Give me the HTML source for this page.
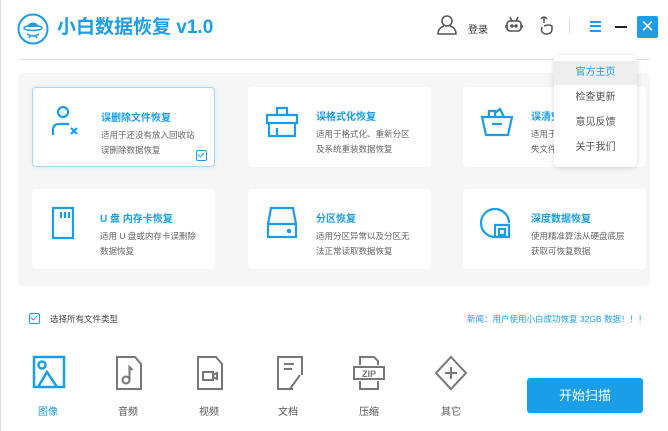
<!DOCTYPE html>
<html><head><meta charset="utf-8"><style>
*{margin:0;padding:0;box-sizing:border-box}
body{width:668px;height:431px;overflow:hidden;background:#fff;font-family:"Liberation Sans","Noto Sans CJK SC",sans-serif;position:relative}
.abs{position:absolute}
.title{left:57px;top:12px;font-size:19px;font-weight:bold;color:#1a9ee8}
.panel{left:18px;top:73px;width:632px;height:213px;background:#f6f6f6;border-radius:6px}
.card{position:absolute;width:183px;height:80px;background:#fff;border-radius:4px}
.card.sel{border:1px solid #a9d6f5;box-shadow:0 0 4px #cde8fb}
.card h4{position:absolute;left:68px;top:21px;font-size:10px;color:#1a9ee8;font-weight:bold}
.card p{position:absolute;left:68px;top:40px;font-size:8.5px;color:#666;line-height:15px;width:115px}
.card svg{position:absolute;left:16px;top:16px}
.menu{left:554px;top:55px;width:83px;height:112px;background:#fff;border-radius:5px;box-shadow:0 1px 6px rgba(0,0,0,.15)}
.menu div{height:24px;line-height:24px;text-align:center;font-size:10px;color:#555;margin-top:1px}
.ft{position:absolute;top:355px}
.lbl{position:absolute;top:403px;font-size:10px;color:#555;width:40px;text-align:center}
.chk{position:absolute;width:11px;height:11px;border:1.5px solid #1a9ee8;border-radius:2px}
.chk::after{content:"";position:absolute;left:2px;top:0px;width:3px;height:5px;border:solid #1a9ee8;border-width:0 1.3px 1.3px 0;transform:rotate(45deg)}
</style></head><body>
<div class="abs" style="left:0;top:0;width:1px;height:431px;background:#ddd"></div>
<svg class="abs" style="left:17px;top:13px" width="32" height="32" viewBox="0 0 32 32"><circle cx="16" cy="16" r="14.5" fill="none" stroke="#1a9ee8" stroke-width="2"/><path d="M9 14q7-9 14 0z" fill="#1a9ee8"/><ellipse cx="16" cy="15" rx="9" ry="2.5" fill="none" stroke="#1a9ee8" stroke-width="1.5"/><path d="M10 21q6 4 12 0M12 25l2-3M20 25l-2-3" stroke="#1a9ee8" stroke-width="1.5" fill="none"/></svg>
<div class="abs title">小白数据恢复 v1.0</div>
<svg class="abs" style="left:437px;top:14px" width="20" height="22" viewBox="0 0 20 22" fill="none" stroke="#555" stroke-width="1.5"><circle cx="10" cy="7" r="5"/><path d="M7 12q-6 2-6 8h18q0-6-6-8"/></svg>
<div class="abs" style="left:468px;top:21px;font-size:10px;color:#333">登录</div>
<svg class="abs" style="left:505px;top:15px" width="18" height="20" viewBox="0 0 18 20" fill="none" stroke="#555" stroke-width="1.6"><rect x="2" y="6" width="14" height="10" rx="3"/><path d="M5 2l2 4M13 2l-2 4M1 10v3M17 10v3"/><circle cx="7" cy="11" r="1" fill="#555"/><circle cx="11" cy="11" r="1" fill="#555"/></svg>
<svg class="abs" style="left:538px;top:15px" width="16" height="20" viewBox="0 0 16 20" fill="none" stroke="#555" stroke-width="1.5"><path d="M6 8V3M4 12q-2 6 4 7q6 0 6-5v-3q-3-2-8 0"/><path d="M3 4q3-4 6 0"/></svg>
<div class="abs" style="left:569px;top:18px;width:1px;height:16px;background:#ddd"></div>
<div class="abs" style="left:590px;top:21px;width:11px;height:1.5px;background:#1a9ee8;box-shadow:0 4px 0 #1a9ee8,0 9px 0 #1a9ee8"></div>
<div class="abs" style="left:615px;top:26px;width:12px;height:2px;background:#222"></div>
<div class="abs" style="left:637px;top:16px;width:21px;height:22px;background:#1a9ee8;border-radius:2px;color:#fff;font-size:17px;text-align:center;line-height:22px">✕</div>
<div class="abs" style="left:18px;top:59px;width:632px;height:1px;background:#e3e3e3"></div>
<div class="abs panel">
<div class="card sel" style="left:14px;top:14px"><svg width="36" height="36" viewBox="0 0 36 36" fill="none" stroke="#1a9ee8" stroke-width="2.2"><circle cx="14" cy="8" r="5"/><path d="M4 31v-5q0-6 6-6h10M22 24l6 6M28 24l-6 6"/></svg><h4>误删除文件恢复</h4><p>适用于还没有放入回收站<br>误删除数据恢复</p><div class="chk" style="left:163px;top:62px"></div></div>
<div class="card" style="left:230px;top:14px"><svg width="36" height="36" viewBox="0 0 36 36" fill="none" stroke="#1a9ee8" stroke-width="2.2"><path d="M3 12h30v8H3zM5 20v13h26V20M13 12V5h10v7M13 33v-8"/></svg><h4>误格式化恢复</h4><p>适用于格式化、重新分区<br>及系统重装数据恢复</p></div>
<div class="card" style="left:445px;top:14px"><svg width="36" height="36" viewBox="0 0 36 36" fill="none" stroke="#1a9ee8" stroke-width="2.2"><path d="M3 14h30l-4 18H7zM10 14V8h6v6M16 10l5-4 4 8M13 21h10"/></svg><h4>误清空回收站恢复</h4><p>适用于回收站清空等丢<br>失文件恢复</p></div>
<div class="card" style="left:14px;top:116px"><svg width="36" height="36" viewBox="0 0 36 36" fill="none" stroke="#1a9ee8" stroke-width="2.2"><path d="M5 3h20v30H5zM13 7v6M17 7v6M21 7v6"/></svg><h4>U 盘 内存卡恢复</h4><p>适用 U 盘或内存卡误删除<br>数据恢复</p></div>
<div class="card" style="left:230px;top:116px"><svg width="36" height="36" viewBox="0 0 36 36" fill="none" stroke="#1a9ee8" stroke-width="2.2"><path d="M7 3h22l3 16v13H4V19zM4 19h28"/><circle cx="25" cy="26" r="1.2" fill="#1a9ee8"/></svg><h4>分区恢复</h4><p>适用分区异常以及分区无<br>法正常读取数据恢复</p></div>
<div class="card" style="left:445px;top:116px"><svg width="36" height="36" viewBox="0 0 36 36" fill="none" stroke="#1a9ee8" stroke-width="2.2"><path d="M16 32A14 14 0 1 1 30 18M16 20h14v12H16zM20 24h6v6h-6z"/></svg><h4>深度数据恢复</h4><p>使用精准算法从硬盘底层<br>获取可恢复数据</p></div>
</div>
<div class="abs" style="left:590px;top:47px;width:10px;height:10px;background:#fff;transform:rotate(45deg)"></div>
<div class="abs menu"><div style="background:#eee;color:#1a9ee8;margin-top:6px">官方主页</div><div>检查更新</div><div>意见反馈</div><div>关于我们</div></div>
<div class="chk" style="left:29px;top:313px"></div>
<div class="abs" style="left:50px;top:313px;font-size:8.5px;color:#444">选择所有文件类型</div>
<div class="abs" style="left:467px;top:313px;font-size:8.5px;color:#1a9ee8">新闻：用户使用小白成功恢复 32GB 数据！！！</div>
<svg class="ft" style="left:32px" width="34" height="34" viewBox="0 0 34 34" fill="none" stroke="#1a9ee8" stroke-width="2.5"><rect x="2" y="2" width="30" height="30"/><circle cx="10" cy="10" r="3.5"/><path d="M6 32l9-15 10 15"/></svg>
<svg class="ft" style="left:115px" width="28" height="36" viewBox="0 0 28 36" fill="none" stroke="#777" stroke-width="2"><path d="M2 2h18l6 7v25H2z"/><circle cx="11" cy="25" r="3.5"/><path d="M14.5 25V12l3 3"/></svg>
<svg class="ft" style="left:196px" width="28" height="36" viewBox="0 0 28 36" fill="none" stroke="#777" stroke-width="2"><path d="M2 2h18l6 7v25H2z"/><rect x="7" y="17" width="10" height="8"/><path d="M17 20l4-2v6l-4-2"/></svg>
<svg class="ft" style="left:276px" width="28" height="36" viewBox="0 0 28 36" fill="none" stroke="#777" stroke-width="2"><path d="M17 34H2V2h24v18M8 9h10M8 14h8M14 34l10-14"/></svg>
<svg class="ft" style="left:352px" width="34" height="36" viewBox="0 0 34 36" fill="none" stroke="#777" stroke-width="2"><path d="M8 10V2h14l4 4v4M8 26v8h18v-8"/><rect x="2" y="12" width="30" height="12"/><text x="17" y="22" font-size="9" font-weight="bold" fill="#777" stroke="none" text-anchor="middle" font-family="Liberation Sans">ZIP</text></svg>
<svg class="ft" style="left:434px" width="34" height="36" viewBox="0 0 34 36" fill="none" stroke="#777" stroke-width="2"><path d="M17 2l15 16-15 16L2 18z"/><path d="M17 12v12M11 18h12"/></svg>
<div class="lbl" style="left:28px;color:#1a9ee8">图像</div>
<div class="lbl" style="left:108px">音频</div>
<div class="lbl" style="left:189px">视频</div>
<div class="lbl" style="left:268px">文档</div>
<div class="lbl" style="left:349px">压缩</div>
<div class="lbl" style="left:431px">其它</div>
<div class="abs" style="left:527px;top:378px;width:116px;height:35px;background:#1a9ee8;border-radius:3px;color:#fff;font-size:13px;text-align:center;line-height:35px">开始扫描</div>
</body></html>
